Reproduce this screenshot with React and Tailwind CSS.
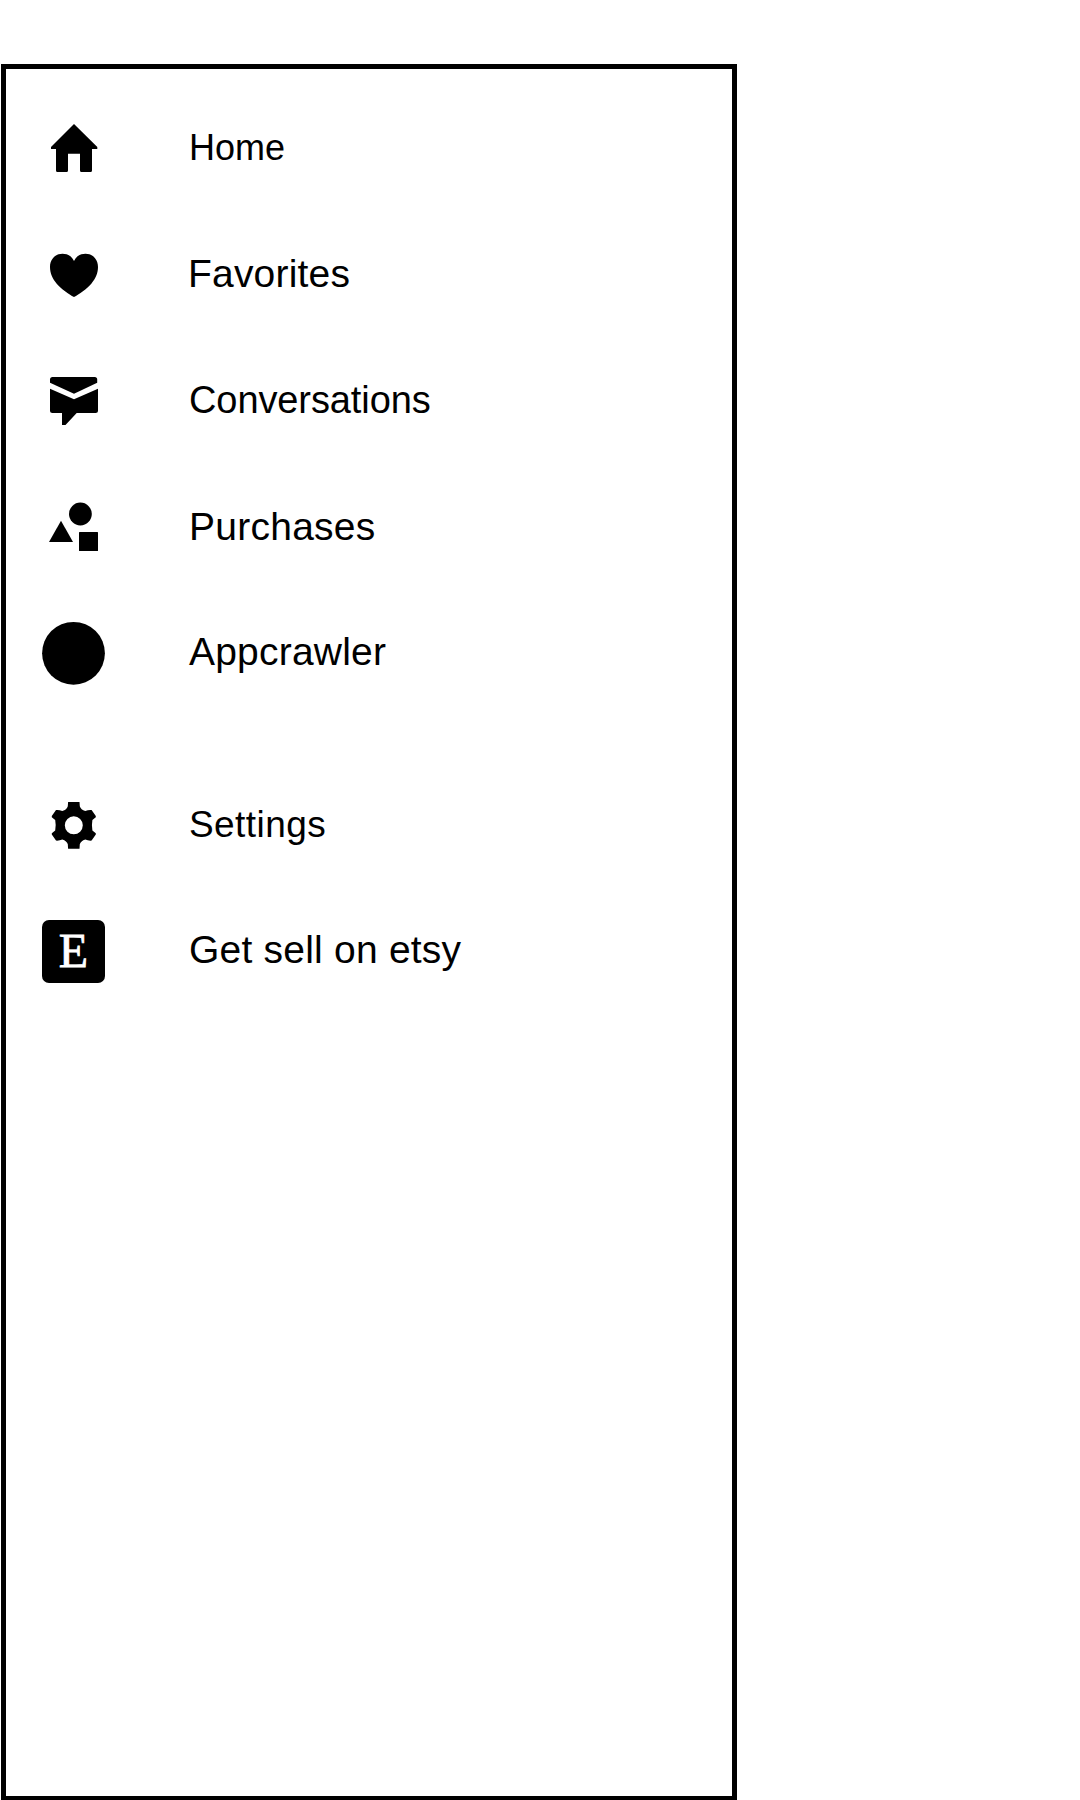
import React from "react";

function HomeIcon() {
  return (
    <svg viewBox="0 0 64 64" className="block size-16 shrink-0" fill="black">
      <path d="M32 8 L55.3 31 V33 H50 V54.5 Q50 56 48.5 56 H39.5 Q38 56 38 54.5 V37.7 H26 V54.5 Q26 56 24.5 56 H15.5 Q14 56 14 54.5 V33 H9 V31 Z" />
    </svg>
  );
}

function HeartIcon() {
  return (
    <svg viewBox="0 0 64 64" className="block size-16 shrink-0" fill="black">
      <path d="M32 19 C34 14.5 38 11.8 43.5 11.8 C51 11.8 56 17.5 56 25 C56 31.5 53.5 36.5 49.5 41.5 C45 46.8 37 52.5 32 55 C27 52.5 19 46.8 14.5 41.5 C10.5 36.5 8 31.5 8 25 C8 17.5 13 11.8 20.5 11.8 C26 11.8 30 14.5 32 19 Z" />
    </svg>
  );
}

function ConversationIcon() {
  return (
    <svg viewBox="0 0 64 64" className="block size-16 shrink-0" fill="black">
      <path d="M8 14.8 V11.5 Q8 9 10.5 9 H52.7 Q55.2 9 55.2 11.5 V14.8 L32 25.8 Z" />
      <path d="M8 20.7 L32 31.3 L56 20.7 V42.5 Q56 45 53.5 45 H34.7 L23.5 57 H20 V45 H10.5 Q8 45 8 42.5 Z" />
    </svg>
  );
}

function PurchasesIcon() {
  return (
    <svg viewBox="0 0 64 64" className="block size-16 shrink-0" fill="black">
      <circle cx="38.4" cy="20" r="11.4" />
      <path d="M19 26.7 L31 48 H7 Z" />
      <rect x="37" y="38" width="19" height="19" rx="0.5" />
    </svg>
  );
}

function AvatarIcon() {
  return (
    <svg viewBox="0 0 64 64" className="block size-16 shrink-0 overflow-visible" fill="black">
      <circle cx="31.5" cy="33.3" r="31.4" />
    </svg>
  );
}

function SettingsIcon() {
  return (
    <svg viewBox="0 0 64 64" className="block size-16 shrink-0" fill="black">
      <g transform="translate(31.8 32.3)">
        <path
          fillRule="evenodd"
          d="M-5.7 -23.4 H5.7 L6 -19 Q7 -15.6 11.5 -14.2 Q14.5 -15.6 17.8 -15.3 L22 -9.2 V-8 L18.6 -5.2 Q17.6 0 18.6 5.2 L22 8 V9.2 L17.8 15.3 Q14.5 15.6 11.5 14.2 Q7 15.6 6 19 L5.7 23.4 H-5.7 L-6 19 Q-7 15.6 -11.5 14.2 Q-14.5 15.6 -17.8 15.3 L-22 9.2 V8 L-18.6 5.2 Q-17.6 0 -18.6 -5.2 L-22 -8 V-9.2 L-17.8 -15.3 Q-14.5 -15.6 -11.5 -14.2 Q-7 -15.6 -6 -19 Z M0 -9 A9 9 0 1 0 0 9 A9 9 0 1 0 0 -9 Z"
        />
      </g>
    </svg>
  );
}

function EtsyIcon() {
  return (
    <span className="flex size-16 shrink-0 items-end">
      <span className="flex size-[63px] items-center justify-center rounded-[7px] bg-black pb-[2px] font-['Liberation_Serif',serif] text-[48px] leading-none text-white [-webkit-text-stroke:0.8px_white]">
        E
      </span>
    </span>
  );
}

const groups = [
  [
    { label: "Home", Icon: HomeIcon, text: "text-[36px]" },
    { label: "Favorites", Icon: HeartIcon, text: "-ml-px text-[39px] tracking-[0.2px]" },
    { label: "Conversations", Icon: ConversationIcon, text: "text-[38px] tracking-[-0.1px]" },
    { label: "Purchases", Icon: PurchasesIcon, text: "text-[39px] pt-[2px] tracking-[0.25px]" },
    { label: "Appcrawler", Icon: AvatarIcon, text: "text-[39px] tracking-[0.2px]" },
  ],
  [
    { label: "Settings", Icon: SettingsIcon, text: "text-[37px] pb-[1px] tracking-[0.42px]" },
    { label: "Get sell on etsy", Icon: EtsyIcon, text: "text-[39px] pb-[3px] tracking-[0.22px]" },
  ],
];

export default function App() {
  return (
    <div className="h-[1800px] w-[1080px] overflow-hidden bg-white pl-px pt-16 font-['Liberation_Sans',Arial,sans-serif] text-black">
      <nav className="flex h-[1737px] w-[736px] flex-col gap-[47px] border-[5px] border-black pl-9 pt-4">
        {groups.map((items, i) => (
          <ul key={i} className="flex flex-col">
            {items.map(({ label, Icon, text }) => (
              <li key={label} className="flex h-[126px] items-center gap-[83px]">
                <Icon />
                <span className={`whitespace-nowrap leading-[44px] ${text}`}>{label}</span>
              </li>
            ))}
          </ul>
        ))}
      </nav>
    </div>
  );
}
